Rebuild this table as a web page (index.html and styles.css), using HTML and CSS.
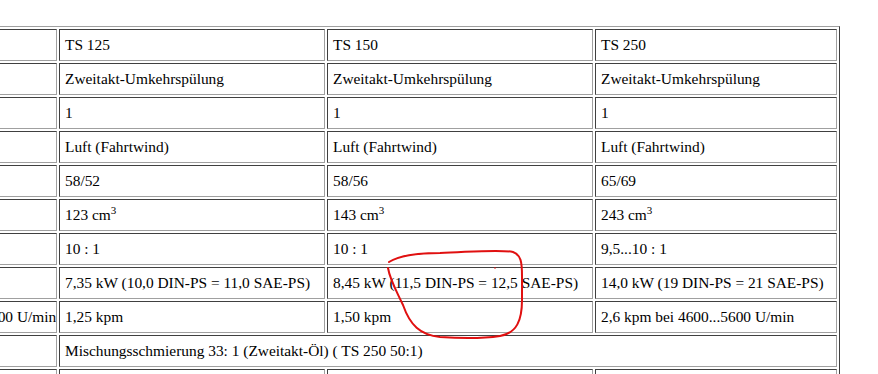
FILE: index.html
```html
<!DOCTYPE html>
<html lang="de">
<head>
<meta charset="utf-8">
<title>Technische Daten</title>
<link rel="stylesheet" href="styles.css">
</head>
<body>
<div class="page">
  <table class="specs">
    <tr>
      <td class="c1">Modell</td>
      <td class="c2">TS 125</td>
      <td class="c3">TS 150</td>
      <td class="c4">TS 250</td>
    </tr>
    <tr>
      <td>Verfahren</td>
      <td>Zweitakt-Umkehrspülung</td>
      <td>Zweitakt-Umkehrspülung</td>
      <td>Zweitakt-Umkehrspülung</td>
    </tr>
    <tr>
      <td>Zylinder</td>
      <td>1</td>
      <td>1</td>
      <td>1</td>
    </tr>
    <tr>
      <td>Kühlung</td>
      <td>Luft (Fahrtwind)</td>
      <td>Luft (Fahrtwind)</td>
      <td>Luft (Fahrtwind)</td>
    </tr>
    <tr>
      <td>Bohrung/Hub</td>
      <td>58/52</td>
      <td>58/56</td>
      <td>65/69</td>
    </tr>
    <tr>
      <td>Hubraum</td>
      <td>123 cm<sup>3</sup></td>
      <td>143 cm<sup>3</sup></td>
      <td>243 cm<sup>3</sup></td>
    </tr>
    <tr>
      <td>Verdichtung</td>
      <td>10 : 1</td>
      <td>10 : 1</td>
      <td>9,5...10 : 1</td>
    </tr>
    <tr>
      <td>Leistung</td>
      <td>7,35 kW (10,0 DIN-PS = 11,0 SAE-PS)</td>
      <td>8,45 kW (11,5 DIN-PS = 12,5 SAE-PS)</td>
      <td>14,0 kW (19 DIN-PS = 21 SAE-PS)</td>
    </tr>
    <tr>
      <td class="end">2,2 kpm bei 4600...5600 U/min</td>
      <td>1,25 kpm</td>
      <td>1,50 kpm</td>
      <td>2,6 kpm bei 4600...5600 U/min</td>
    </tr>
    <tr>
      <td>Schmierung</td>
      <td colspan="3">Mischungsschmierung 33: 1 (Zweitakt-Öl) ( TS 250 50:1)</td>
    </tr>
    <tr>
      <td>Vergaser</td>
      <td>BVF 24 N 2-1</td>
      <td>BVF 24 N 2-1</td>
      <td>BVF 30 N 2-4</td>
    </tr>
  </table>
  <svg class="mark" width="878" height="374" viewBox="0 0 878 374" aria-hidden="true">
    <path d="M389,262 C400,255 420,253 440,253 C470,252 500,249 513,252 C521,255 522,262 522,276 L522,300 C522,320 517,333 500,336 C480,339 455,338 440,337 C420,335 410,325 403,305 C396,290 390,280 388,268" />
    <circle cx="495" cy="268" r="0.8" />
  </svg>
</div>
</body>
</html>
```

FILE: styles.css
```css
html {
  overflow: hidden;
}

body {
  margin: 0;
  background: #ffffff;
  color: #000000;
  font-family: "Liberation Serif", "Times New Roman", serif;
  font-size: 15px;
}

.page {
  position: relative;
  padding-top: 26px;
  height: 348px;
  overflow: hidden;
}

.specs {
  box-sizing: border-box;
  width: 986px;
  margin-left: -146px;
  table-layout: fixed;
  border-collapse: separate;
  border-spacing: 2px;
  border-style: solid;
  border-width: 1px;
  border-color: #a0a0a0 #404040 #404040 #a0a0a0;
  font-family: "Liberation Serif", "Times New Roman", serif;
  font-size: 15px;
}

.specs td {
  box-sizing: border-box;
  padding: 6px 5px;
  font-family: "Liberation Serif", "Times New Roman", serif;
  font-size: 15.4px;
  line-height: 18px;
  white-space: nowrap;
  overflow: hidden;
  vertical-align: middle;
  border-style: solid;
  border-width: 1px;
  border-color: #404040 #a0a0a0 #a0a0a0 #404040;
}

.specs sup {
  font-size: 11px;
  line-height: 0;
  vertical-align: 6px;
}

.c1 { width: 200px; }
.c2 { width: 266px; }
.c3 { width: 266px; }
.c4 { width: 242px; }

.specs td.end {
  text-align: right;
}

.mark {
  position: absolute;
  left: 0;
  top: 0;
  pointer-events: none;
}

.mark path {
  fill: none;
  stroke: #e01010;
  stroke-width: 2;
  stroke-linecap: round;
  stroke-linejoin: round;
}

.mark circle {
  fill: #e01010;
}
```
